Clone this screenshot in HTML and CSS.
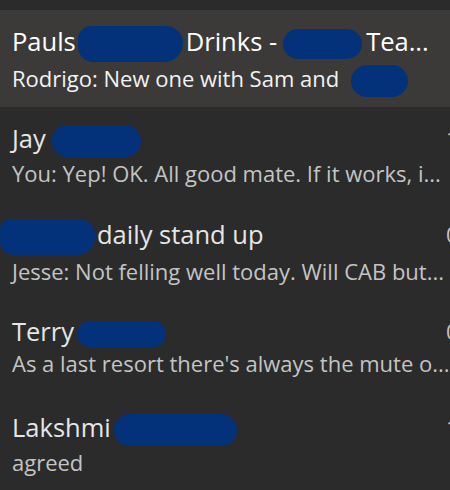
FILE: index.html
```html
<!DOCTYPE html>
<html>
<head>
  <title>Conversations</title>
  <link rel="stylesheet" href="styles.css">
</head>
<body>
  <div id="chat-list">
    <div class="chat selected">
      <div class="title-row">
        <div class="title">Pauls<span class="redact r-pauls"></span>Drinks -<span class="redact r-drinks"></span>Tea...</div>
        <div class="time"></div>
      </div>
      <div class="preview">Rodrigo: New one with Sam and<span class="redact r-sam"></span></div>
    </div>

    <div class="chat">
      <div class="title-row">
        <div class="title">Jay<span class="redact r-jay"></span></div>
        <div class="time">10:42</div>
      </div>
      <div class="preview">You: Yep! OK. All good mate. If it works, i...</div>
    </div>

    <div class="chat">
      <div class="title-row">
        <div class="title"><span class="redact r-daily"></span>daily stand up</div>
        <div class="time">09:15</div>
      </div>
      <div class="preview">Jesse: Not felling well today. Will CAB but...</div>
    </div>

    <div class="chat">
      <div class="title-row">
        <div class="title">Terry<span class="redact r-terry"></span></div>
        <div class="time">08:30</div>
      </div>
      <div class="preview">As a last resort there's always the mute o...</div>
    </div>

    <div class="chat">
      <div class="title-row">
        <div class="title">Lakshmi<span class="redact r-lakshmi"></span></div>
        <div class="time">1/06</div>
      </div>
      <div class="preview">agreed</div>
    </div>
  </div>
</body>
</html>
```

FILE: styles.css
```css
body {
  margin: 0;
  background-color: #2b2b2b;
  font-family: "Open Sans", "Noto Sans", sans-serif;
  overflow: hidden;
}
#chat-list {
  width: 540px;
  padding-top: 10px;
}
.chat {
  height: 96.5px;
  box-sizing: border-box;
  padding: 15px 0 0 12px;
  color: #e6e6e6;
}
.chat.selected {
  background-color: #3b3a39;
  color: #fff;
}
.title-row {
  display: grid;
  grid-template-columns: 434px 1fr;
}
.title {
  font-size: 25.5px;
  line-height: 32px;
  white-space: nowrap;
}
.time {
  font-size: 22px;
  line-height: 32px;
  color: #c4c4c4;
}
.preview {
  font-size: 22px;
  line-height: 33px;
  white-space: nowrap;
  color: #c4c4c4;
}
.selected .preview {
  color: #f2f2f2;
}
.redact {
  display: inline-block;
  background-color: #03327a;
  border-radius: 16px;
  vertical-align: middle;
}
.r-pauls { width: 105px; height: 36px; margin: 0 3px 0 2px; border-radius: 14px 18px 20px 16px; }
.r-drinks { width: 79px; height: 30px; margin: 0 4px 0 6px; }
.r-sam { width: 57px; height: 32px; margin-left: 12px; }
.r-jay { width: 89px; height: 32px; margin-left: 6px; }
.r-daily { width: 95px; height: 36px; margin: 0 2px 0 -12px; border-radius: 10px 16px 18px 14px; }
.r-terry { width: 89px; height: 26px; margin-left: 3px; }
.r-lakshmi { width: 123px; height: 32px; margin-left: 3px; }
```
